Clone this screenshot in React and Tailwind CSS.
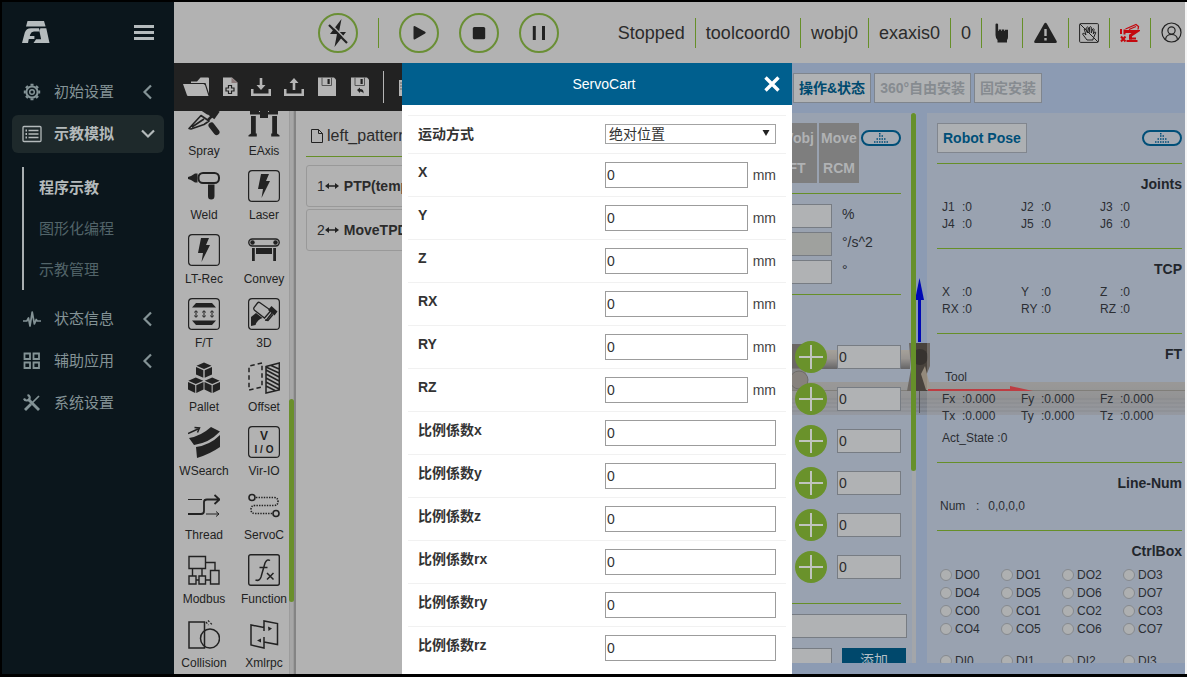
import React from "react";

const LINE = "border-[#668f28]";

function Logo() {
  return (
    <svg width="28" height="22" viewBox="0 0 28 22" fill="#b5bbbd">
      <path d="M5.5 0H22l1.600 5.600H4z" />
      <path d="M0 22 2.800 11.500Q4.200 7.200 9 7.200h8l1 3.400h-6q-2.800 0-3.800 2.800l-.4 1.600h4.600v3H6.800L6 22z" />
      <path d="M18.300 7.200h6L27.500 22H11.500l2.600-3.800h5L17.600 11z" />
    </svg>
  );
}

function Chevron({ down }) {
  return (
    <svg width="16" height="16" viewBox="0 0 16 16" fill="none" stroke="currentColor" strokeWidth="2.200">
      <path d={down ? "M2 4.500l6 6 6-6" : "M11 1.500 4.500 8l6.500 6.500"} />
    </svg>
  );
}

const sideIcons = {
  gear: (
    <svg width="20" height="20" viewBox="0 0 20 20" fill="none" stroke="currentColor">
      <circle cx="10" cy="10" r="5.600" strokeWidth="2" />
      <circle cx="10" cy="10" r="2.300" strokeWidth="1.500" />
      <path strokeWidth="3" d="M10 1.800v2M10 16.200v2M1.800 10h2M16.200 10h2M4.200 4.200l1.400 1.400M14.400 14.400l1.400 1.400M4.200 15.800l1.400-1.400M14.400 5.600l1.400-1.400" />
    </svg>
  ),
  list: (
    <svg width="20" height="20" viewBox="0 0 20 20" fill="none" stroke="currentColor" strokeWidth="1.300">
      <rect x="1" y="2.500" width="18" height="15" rx="1" />
      <path d="M3.500 6.500H5M3.500 10H5M3.500 13.500H5" strokeWidth="2" />
      <path d="M6.500 6.500h10M6.500 10h10M6.500 13.500h10" />
    </svg>
  ),
  pulse: (
    <svg width="20" height="20" viewBox="0 0 20 20" fill="none" stroke="currentColor" strokeWidth="1.700" strokeLinejoin="round">
      <path d="M1 12h3.800l1.700-3 1.500 8L10.200 3l2.200 12 1.800-4.500 1 1.500H19" />
    </svg>
  ),
  grid: (
    <svg width="20" height="20" viewBox="0 0 20 20" fill="none" stroke="currentColor" strokeWidth="1.800">
      <path d="M2.500 2.500h5.500v5.500H2.500zM11.500 2.500H17v5.500h-5.500zM2.500 11.500h5.500V17H2.500zM11.500 11.500H17V17h-5.500z" />
    </svg>
  ),
  tools: (
    <svg width="20" height="20" viewBox="0 0 20 20" fill="none" stroke="currentColor">
      <path strokeWidth="2.800" d="M6 6l11 11" />
      <path strokeWidth="1.700" d="M17 3 8.500 11.500" />
      <path strokeWidth="2.800" d="M8.800 11.200 3 17" />
      <path strokeWidth="2.200" d="M2 5.500c1 2.500 4 2.500 5.200.8S7.500 2.500 5.500 2" />
    </svg>
  ),
};

function SideItem({ icon, label, chevron, active }) {
  return (
    <button
      type="button"
      className={
        active
          ? "flex h-[38px] w-full items-center rounded-md bg-[#1e292b] pl-[10px] pr-2 text-[15px] font-bold text-[#b4babb]"
          : "flex h-[38px] w-full items-center rounded-md pl-[10px] pr-2 text-[15px] text-[#849396]"
      }
    >
      {sideIcons[icon]}
      <span className="ml-3 flex-1 text-left">{label}</span>
      {chevron && <Chevron down={active} />}
    </button>
  );
}

function Sidebar() {
  return (
    <nav className="flex w-[172px] flex-none flex-col bg-[#0b161c] px-[10px]">
      <div className="mb-[11px] flex h-[60px] items-center justify-between px-[10px]">
        <Logo />
        <button type="button" aria-label="菜单" className="flex flex-col gap-[3px]">
          <span className="block h-[3px] w-5 bg-[#b5bbbd]" />
          <span className="block h-[3px] w-5 bg-[#b5bbbd]" />
          <span className="block h-[3px] w-5 bg-[#b5bbbd]" />
        </button>
      </div>
      <div className="flex flex-col gap-1">
        <SideItem icon="gear" label="初始设置" chevron />
        <SideItem icon="list" label="示教模拟" chevron active />
      </div>
      <ul className="mb-[10px] ml-[10px] mt-[14px] border-l-2 border-[#a9afb1] pl-[15px] text-[15px] leading-[41px] text-[#526469]">
        <li><a href="#program" className="font-bold text-[#b4babb]">程序示教</a></li>
        <li><a href="#graph">图形化编程</a></li>
        <li><a href="#manage">示教管理</a></li>
      </ul>
      <div className="flex flex-col gap-1">
        <SideItem icon="pulse" label="状态信息" chevron />
        <SideItem icon="grid" label="辅助应用" chevron />
        <SideItem icon="tools" label="系统设置" />
      </div>
    </nav>
  );
}

function RoundButton({ label, children }) {
  return (
    <button type="button" aria-label={label} className="flex size-10 items-center justify-center rounded-full border-2 border-[#6a8f35]">
      <svg width="24" height="28" viewBox="0 -2 24 28" fill="#222">{children}</svg>
    </button>
  );
}

function Status({ children, last }) {
  return (
    <div className={last ? "flex h-[30px] items-center pl-[10px]" : "flex h-[30px] items-center border-r border-[#668f28] px-[10px]"}>
      {children}
    </div>
  );
}

function Header() {
  return (
    <header className="flex h-[61px] flex-none items-center justify-between bg-[#b2b2b2] pl-36 pr-[3px]">
      <div className="flex items-center gap-5">
        <RoundButton label="伺服">
          <path d="M15.500-2 4 13h7L8.500 26 20 11h-7z" />
          <path d="M4.500 2.500 22 20.500" stroke="#b2b2b2" strokeWidth="1.500" />
          <path d="M3 4 21 22" stroke="#222" strokeWidth="2.200" />
        </RoundButton>
        <span className="h-[30px] w-px bg-[#668f28]" />
        <RoundButton label="运行"><path d="M6.500 6.200q0-1.800 1.600-1l10 5.600q1.400.9 0 1.800l-10 5.600q-1.600.8-1.600-1z" /></RoundButton>
        <RoundButton label="停止"><rect x="5.800" y="6" width="12.400" height="12.200" rx="1.500" /></RoundButton>
        <RoundButton label="暂停"><path d="M5.800 5h3v14h-3zM15 5h3v14h-3z" /></RoundButton>
      </div>
      <div className="flex items-center text-lg text-[#2b2b2b]">
        <Status>Stopped</Status>
        <Status>toolcoord0</Status>
        <Status>wobj0</Status>
        <Status>exaxis0</Status>
        <Status>0</Status>
        <Status>
          <svg width="20" height="22" viewBox="0 0 20 22" fill="#222">
            <path d="M3.500 2.500q0-1 1.300-1t1.300 1V9h.6V7.500h2.400V9h.6V7.500h2.400V9h.6V7.800h3.300V15q0 2-1 3v2.500H5.500V18Q3.500 16 3.500 13z" />
          </svg>
        </Status>
        <Status>
          <svg width="25" height="22" viewBox="0 0 25 22">
            <path d="M11 2q1.500-2.400 3 0l9.600 17q.8 2-1.200 2H2.600q-2 0-1.200-2z" fill="#222" />
            <path d="M12.500 7v7M12.500 16v2.500" stroke="#b2b2b2" strokeWidth="2.400" />
          </svg>
        </Status>
        <Status>
          <svg width="20" height="20" viewBox="0 0 20 20" fill="none" stroke="#222" strokeWidth="1">
            <rect x=".6" y=".6" width="18.800" height="18.800" rx="1" />
            <path d="M8 17l-4.500-6q.3-1.300 1.800-.5L7 12 5.200 6q.6-1.300 1.500 0L8.500 10 7.700 4.500q.8-1.200 1.600 0L10.300 9.500 10.700 4q.9-1 1.600.2V10l1.400-4q1-.8 1.400.3L14.300 11l1.300-2q1.100-.4 1.100.8L14 16v1zM1 1l18 18" />
          </svg>
        </Status>
        <Status>
          <svg width="20" height="20" viewBox="0 0 20 20" fill="none" stroke="#c4090f">
            <path strokeWidth="3" d="M5 8.500h11.500l-6 4v4" />
            <path strokeWidth="1.300" d="M5.500 6 16 1.500l2.500 2-.5 3M9 6.500 16 3.500" />
            <path strokeWidth="2" d="M1 6v5M4.500 6.500v5M6.500 18h11M9 15.500h7" />
            <path strokeWidth="2" d="M1 13.500l4.500 5M5.500 13.500 1 18.500" />
          </svg>
        </Status>
        <Status last>
          <svg width="21" height="21" viewBox="0 0 21 21" fill="none" stroke="#222" strokeWidth="1.200">
            <circle cx="10.500" cy="10.500" r="9.500" />
            <circle cx="10.500" cy="8.500" r="3.600" />
            <path d="M4.500 17.500q.6-5 6-5t6 5" />
          </svg>
        </Status>
      </div>
    </header>
  );
}

function FileButton({ label, w, children }) {
  return (
    <button type="button" aria-label={label}>
      <svg width={w} height="20" viewBox={`0 0 ${w} 20`} fill="#b5b5b5">{children}</svg>
    </button>
  );
}

function FileBar() {
  return (
    <div className="flex h-12 flex-none items-center gap-[13px] overflow-hidden bg-[#222] pl-[9px]">
      <FileButton label="打开" w={26}>
        <path d="M8 4.500h6L17.500.5H25q1 0 1 1v15L22.500 6H8z" />
        <path d="M0 7h20.500l1.500 1 3.500 11H5q-.8 0-1-.8z" />
      </FileButton>
      <FileButton label="新建" w={16}>
        <path d="M1 .5h9l5.500 5V19H1z" />
        <path d="M9.500.5 15.500 6h-6z" fill="#8a7878" />
        <path d="M6.500 8.500h3v2.500H12v3H9.500v2.500h-3V14H4v-3h2.500z" fill="#b5b5b5" stroke="#222" strokeWidth="1.200" />
      </FileButton>
      <FileButton label="导入" w={20}>
        <path d="M0 12h2.500v4.500h15V12H20v7H0zM8.700 1h2.600v7h3.200L10 13 5.500 8h3.200z" />
      </FileButton>
      <FileButton label="导出" w={20}>
        <path d="M0 12h2.500v4.500h15V12H20v7H0zM8.700 13h2.600V6h3.200L10 1 5.500 6h3.200z" />
      </FileButton>
      <FileButton label="保存" w={20}>
        <path d="M1 .5h16l2 2V19H1z" />
        <path d="M5 .5v8h9.500v-8" fill="none" stroke="#555" />
        <path d="M10.500 2h2.200v5h-2.200z" fill="#222" />
      </FileButton>
      <FileButton label="另存为" w={20}>
        <path d="M1 .5h16l2 2V19H1z" />
        <path d="M5 .5v8h9.500v-8" fill="none" stroke="#555" />
        <path d="M10.500 2h2.200v5h-2.200zM7 13l3-2.500v1.600q4 0 3.500 4.400-.8-2-3.500-2v1.500z" fill="#222" />
      </FileButton>
      <span className="h-8 w-px flex-none bg-[#b5b5b5]" />
      <FileButton label="复制" w={20}>
        <path d="M2 3h15v16H2z" />
        <path d="M3 6h8M3 9h8M3 12h8" stroke="#666" />
      </FileButton>
    </div>
  );
}

const frame = <rect x=".6" y=".6" width="30.800" height="30.800" rx="3.500" fill="none" stroke="#222" strokeWidth="1.200" />;
const bolt = <path d="M13 4h8l-3 7h4L13.500 28l1.500-9h-5z" fill="#222" />;

const tools = [
  ["Spray", <g fill="none" stroke="#222"><path strokeWidth="1.600" strokeLinejoin="round" d="M1 22.500 13 9.500l8 5.500-5 3.500-13 4.500zM4 21l12-8" /><path strokeWidth="5.500" d="M15 2.500l6 4" /><path strokeWidth="9" d="M21.500 4l7.500 5.500" /><path strokeWidth="2.500" d="M20 14l4-4" /><path strokeWidth="6" strokeLinecap="round" d="M23.500 19.500l5 6.500" /></g>],
  ["EAxis", <g fill="#222"><path d="M2 4h9v2h10V4h9v4.500H2zM12 4h8v8h-8zM3 10h4.800v18H3zM24.200 10H29v18h-4.800z" /><path d="M.5 30.500v-1.200L3 27.500h5.800v3zM31.500 30.500v-1.200L29 27.500h-5.800v3z" /></g>],
  ["Weld", <g><rect x="10.500" y="3" width="20.500" height="10" rx="4.500" fill="none" stroke="#222" strokeWidth="2" /><path d="M0 7l3-1 4-2.500h2.500v9H7L3 10 0 9z" fill="#222" /><path d="M20 14.500h6.500V26q0 3.500-3.300 3.500T20 26z" fill="#222" /></g>],
  ["Laser", <g>{frame}{bolt}</g>],
  ["LT-Rec", <g>{frame}{bolt}</g>],
  ["Convey", <g><rect x=".8" y="5" width="30.400" height="7" rx="3.500" fill="none" stroke="#222" strokeWidth="1.400" /><circle cx="4.500" cy="8.500" r="2.200" fill="#222" /><circle cx="27.500" cy="8.500" r="2.200" fill="#222" /><path d="M8 14h16v6H8zM4 14h2.800v13H4zM25.200 14H28v13h-2.800z" fill="#222" /></g>],
  ["F/T", <g>{frame}<path d="M8 5h16l4 4.500H4zM4 22.500h24l-4 4.500H8z" fill="#222" /><path d="M6.500 14.500Q8 11 9.500 14.500M6.500 17.500Q8 21 9.500 17.500M8 13v6M14.500 14.500q1.500-3.500 3 0M14.500 17.500q1.500 3.500 3 0M16 13v6M22.500 14.500q1.500-3.500 3 0M22.500 17.500q1.500 3.500 3 0M24 13v6" fill="none" stroke="#222" strokeWidth="1" /></g>],
  ["3D", <g>{frame}<path d="M3 19l5-4 6.500 5q-5 1.500-7 7L3 28zM20 12l3.500-4 6 5.500-3 4z" fill="#222" /><path d="M9.500 5 6 9.500q-.8 1.500.5 2.700L16.500 20l6.500-7.500L12 4.700q-1.500-1-2.500.3zM18.500 22l5.500-7M17 22l3 .5 5-6" fill="none" stroke="#222" strokeWidth="1.300" /></g>],
  ["Pallet", <g fill="#222"><path d="M16 .5l7.500 3.300L16 7 8.500 3.800zM8 5l7.300 3.200v7.500L8 12.500zM24 5l-7.300 3.200v7.500l7.300-3.200zM7.800 15.500l7.500 3.300-7.500 3.300-7.500-3.300zM0 20l7.200 3.200V31L0 27.500zM15.500 20l-7.200 3.200V31l7.200-3.500zM24.200 15.500l7.500 3.300-7.500 3.300-7.500-3.300zM16.500 20l7.100 3.200V31l-7.100-3.500zM32 20l-7.300 3.200V31l7.300-3.500z" /></g>],
  ["Offset", <g fill="none" stroke="#222" strokeWidth="1.500"><path strokeDasharray="4.500 3" d="M14 1 1 4v24l13-3z" /><path d="M18 4.500 31.300 1v27L18 31zM18 8l13 7M18 12l13 7M18 16l13 7M18 20l13 7M18 24l10 5M18 5l13 6M23 3.500l8 3.500" /></g>],
  ["WSearch", <g fill="#222"><path d="M1 12q12-2 22-11l9 4.500Q21 17 6 19zM8 21q14-2 24-12v12Q22 28 9 32z" /><path d="M0 7.500 11 2.500M6.500 1.500 11.500 2 9.500 6.500" fill="none" stroke="#222" strokeWidth="1.500" /></g>],
  ["Vir-IO", <g>{frame}<text x="16" y="14" fontSize="12" fontWeight="bold" textAnchor="middle" fill="#222">V</text><text x="16" y="27" fontSize="10" fontWeight="bold" textAnchor="middle" fill="#222">I / O</text></g>],
  ["Thread", <g fill="none" stroke="#222"><path strokeWidth="1" d="M0 9.500h14M18 24h13M28 21.500l3 2.500-3 2.500" /><path strokeWidth="1.800" d="M0 24h13q3 0 3-3v-9q0-2.500 3-2.500h12M26.500 5l5 4.500-5 4.500" /></g>],
  ["ServoC", <g fill="none" stroke="#222" strokeWidth="1.600"><circle cx="4" cy="7.500" r="3" /><circle cx="28" cy="23.500" r="3" /><path strokeDasharray="1.400 1.200" d="M8 7.500h18q4 0 4 4t-4 4H7q-4 0-4 4t4 4h17" /></g>],
  ["Modbus", <g fill="none" stroke="#222" strokeWidth="1.400"><path d="M1 2.500h16.500v12H1zM17.500 8.500h9.500v8M22.500 16.500H31V30h-8.500zM1 22h7v8H1zM11 22h6.500v8H11zM4.500 14.500V22M14 14.500V22M8 26h3M17.500 26h5" /></g>],
  ["Function", <g><rect x=".7" y=".7" width="30.600" height="30.600" rx="2" fill="none" stroke="#222" strokeWidth="1.400" /><path d="M22 6.500Q19 4.500 17 9l-4 14q-1.500 4.500-5.500 3M11.500 13.500h8M19 19l6.500 6.500M25.500 19 19 25.500" fill="none" stroke="#222" strokeWidth="1.500" /></g>],
  ["Collision", <g fill="none" stroke="#222" strokeWidth="1.500"><path d="M1 4h15.500v26H1z" /><circle cx="22" cy="20.500" r="9.500" /><path strokeDasharray="2 1.500" d="M18 4l2.500 3M20 2.500l4.500 4.500" strokeWidth="1.200" /></g>],
  ["Xmlrpc", <g fill="none" stroke="#222" strokeWidth="1.500"><path d="M16 13V3l13.500 2.500v21L16 24M16 9.500 3 7v20l13 3V19" /><path d="M20 8.500l4 2-3.500 2.500zM13 20.500l-4 2 4 2z" fill="#222" stroke="none" /></g>],
];

function ToolBox() {
  return (
    <div className="relative w-[122px] flex-none overflow-hidden border-r-2 border-[#848484]">
      <div className="-mt-[5px] grid grid-cols-2 gap-y-2">
        {tools.map(([name, art]) => (
          <button type="button" key={name} className="flex h-14 flex-col items-center text-xs leading-[26px] text-[#222]">
            <svg width="32" height="32" viewBox="0 0 32 32" className="flex-none">{art}</svg>
            {name}
          </button>
        ))}
      </div>
      <div className="absolute inset-y-0 right-0 w-[5px] border-x border-[#9c9c9c] bg-[#a6a6a6]" />
      <div className="absolute right-0 top-[288px] h-[203px] w-[5px] rounded bg-[#6a8f2b]" />
    </div>
  );
}

function ProgramRow({ n, text }) {
  return (
    <li className="flex h-[42px] items-center rounded-[3px] border border-[#999] pl-[10px] text-sm">
      {n}
      <svg width="14" height="10" viewBox="0 0 14 10" fill="#222"><path d="M0 5l4-3v2.200h6V2L14 5l-4 3V5.800H4V8z" /></svg>
      <b className="ml-[5px] whitespace-nowrap">{text}</b>
    </li>
  );
}

function Program() {
  return (
    <div className="min-w-0 flex-1 overflow-hidden pl-[10px] text-[#2b2b2b]">
      <div className={`mb-2 flex h-[46px] items-center border-b ${LINE} pl-[5px] pt-[5px] text-base`}>
        <svg width="12" height="14" viewBox="0 0 12 14" fill="none" stroke="#222" className="mr-1"><path d="M.5.500h7L11.500 4.500v9H.5zM7.500.5v4h4" /></svg>
        left_pattern
      </div>
      <ul className="flex flex-col gap-0.5">
        <ProgramRow n="1" text="PTP(temp" />
        <ProgramRow n="2" text="MoveTPD" />
      </ul>
    </div>
  );
}

function Scene() {
  return (
    <svg width="440" height="611" viewBox="745 63 440 611" className="absolute inset-y-0 right-0">
      <defs>
        <linearGradient id="ground" x1="0" y1="0" x2="0" y2="1">
          <stop offset="0" stopColor="#8d8d8d" />
          <stop offset=".5" stopColor="#828488" />
          <stop offset="1" stopColor="#868e9c" />
        </linearGradient>
        <linearGradient id="arm" x1="0" y1="0" x2="0" y2="1">
          <stop offset="0" stopColor="#a09a90" />
          <stop offset=".45" stopColor="#8a8682" />
          <stop offset="1" stopColor="#3c3d41" />
        </linearGradient>
      </defs>
      <rect x="745" y="382" width="440" height="33" fill="url(#ground)" />
      <path d="M745 390.500h440" stroke="#66645f" />
      <path d="M745 399h440M745 403h440M745 407h440M745 411h440" stroke="#70747c" strokeWidth=".7" />
      <path d="M919.500 391v22" stroke="#555" />
      <rect x="780" y="344" width="30" height="25" fill="#45413e" />
      <rect x="815" y="350" width="95" height="19" fill="url(#arm)" />
      <path d="M780 368h25l4 22h-29z" fill="#65615b" opacity=".7" />
      <circle cx="799" cy="380" r="9" fill="#706b64" stroke="#4c4945" />
      <path d="M909 343h21v23l-4 10 4 15h-23l4-22z" fill="#49433c" />
      <circle cx="920" cy="357" r="8" fill="#37332f" />
      <path d="M925 366l6 24h-5l-5-16z" fill="#948a7b" />
      <path d="M919.500 300v42" stroke="#0008b4" strokeWidth="3" />
      <path d="M919.500 278l4.500 22h-9z" fill="#0008b4" />
      <path d="M928 390h90" stroke="#c4000a" strokeWidth="2" />
      <path d="M1010 386l23 5h-23z" fill="#c4000a" />
    </svg>
  );
}

function Pill() {
  return (
    <button type="button" aria-label="展开" className="flex h-4 w-10 items-center justify-center rounded-full border-2 border-[#004f78] bg-[#a4abb4]">
      <svg width="15" height="10" viewBox="0 0 15 10" stroke="#004f78" strokeWidth="1.500" strokeDasharray="1.500 1">
        <path d="M0 9h15M2.500 6h10M5 3h5M5 .8h1.500" />
      </svg>
    </button>
  );
}

function Box({ label, className = "", muted, ...rest }) {
  return (
    <input
      aria-label={label}
      className={`block h-6 border border-[#777c83] pl-px text-sm text-[#2b2b2b] ${muted ? "bg-[#9fa19e]" : "bg-[#b0b2b4]"} ${className}`}
      {...rest}
    />
  );
}

function Operations() {
  return (
    <section className="relative w-[171px] flex-none overflow-hidden bg-[#b1afad]/35 pl-5 pr-[15px] pt-[10px] text-[#2b2e33]">
      <div className="flex items-start">
        <div className="ml-[12px] grid flex-none grid-cols-2 gap-x-0.5 text-sm font-bold text-[#b0b2b4]">
          <button type="button" className="h-[30px] w-10 bg-[#7e7e7e]">Wobj</button>
          <button type="button" className="h-[30px] w-10 bg-[#7e7e7e]">Move</button>
          <button type="button" className="h-[30px] w-10 bg-[#7e7e7e]">FT</button>
          <button type="button" className="h-[30px] w-10 bg-[#7e7e7e]">RCM</button>
        </div>
        <div className="ml-0.5 mt-[7px]"><Pill /></div>
      </div>
      <div className={`mt-[10px] flex flex-col gap-1 border-y ${LINE} py-[10px] text-sm leading-5`}>
        {["%", "°/s^2", "°"].map((unit) => (
          <label key={unit} className="flex h-6 items-start gap-[10px]">
            <Box label={unit} className="w-[67px] flex-none" muted={unit === "°/s^2"} />
            {unit}
          </label>
        ))}
      </div>
      <div className={`flex flex-col gap-[10px] border-b ${LINE} pb-5 pt-[46px]`}>
        {[1, 2, 3, 4, 5, 6].map((j) => (
          <div key={j} className="flex items-center justify-end gap-[10px]">
            <button type="button" aria-label={`J${j}+`} className="flex size-8 items-center justify-center rounded-full bg-[#6a922b]">
              <svg width="24" height="24" viewBox="0 0 24 24" stroke="#c0c4bd" strokeWidth="2"><path d="M12 0v24M0 12h24" /></svg>
            </button>
            <Box label={`J${j}`} className="w-16" defaultValue="0" />
          </div>
        ))}
      </div>
      <div className="-mr-1.5 mt-[10px]">
        <Box label="名称" className="w-full" />
        <div className="mt-[10px] flex gap-[10px] pr-px">
          <Box label="点名" className="min-w-0 flex-1" />
          <button type="button" className="h-6 w-16 bg-[#00486c] text-sm text-[#b4bfc6]">添加</button>
        </div>
      </div>
      <div className="absolute inset-y-0 right-0 w-1 bg-[#a3a6aa]" />
      <div className="absolute right-0 top-0 h-[358px] w-[5px] rounded bg-[#66902a]" />
    </section>
  );
}

function Heading({ children }) {
  return <h2 className={`border-t ${LINE} pt-[10px] text-right text-sm font-bold leading-5 text-[#22262c]`}>{children}</h2>;
}

function Values({ items }) {
  return (
    <dl className="grid grid-cols-[79px_79px_79px] pl-[5px]">
      {items.map(([k, v]) => (
        <div key={k} className="flex">
          <dt className="w-5">{k}</dt>
          <dd>:{v}</dd>
        </div>
      ))}
    </dl>
  );
}

const outputs = ["DO0", "DO1", "DO2", "DO3", "DO4", "DO5", "DO6", "DO7", "CO0", "CO1", "CO2", "CO3", "CO4", "CO5", "CO6", "CO7"];
const inputs = ["DI0", "DI1", "DI2", "DI3"];

function Signals({ names }) {
  return (
    <div className="grid grid-cols-[61px_61px_61px_61px] pl-[3px] leading-[18px]">
      {names.map((n) => (
        <label key={n} className="flex items-center gap-[3px]">
          <input type="radio" name={n} className="size-3 appearance-none rounded-full border border-[#868a8f] bg-[#aeb0b1]" />
          {n}
        </label>
      ))}
    </div>
  );
}

function RobotState() {
  return (
    <section className="min-w-0 flex-1 overflow-hidden bg-[#b1afad]/35 pl-[10px] pr-[3px] pt-[10px] text-xs leading-[17px] text-[#2b2e33]">
      <div className="mb-[10px] flex items-center justify-between">
        <button type="button" className="h-[30px] border border-[#81868e] bg-[#adb0b3] px-[5px] text-sm font-bold text-[#004f78]">Robot Pose</button>
        <Pill />
      </div>
      <Heading>Joints</Heading>
      <div className="mb-[15px] mt-[5px]">
        <Values items={[["J1", 0], ["J2", 0], ["J3", 0], ["J4", 0], ["J5", 0], ["J6", 0]]} />
      </div>
      <Heading>TCP</Heading>
      <div className="mb-[15px] mt-[5px]">
        <Values items={[["X", 0], ["Y", 0], ["Z", 0], ["RX", 0], ["RY", 0], ["RZ", 0]]} />
      </div>
      <Heading>FT</Heading>
      <div className="mb-[15px] mt-[5px]">
        <p className="mb-[5px] pl-2">Tool</p>
        <Values items={[["Fx", "0.000"], ["Fy", "0.000"], ["Fz", "0.000"], ["Tx", "0.000"], ["Ty", "0.000"], ["Tz", "0.000"]]} />
        <p className="mt-[5px] pl-[5px]">Act_State :0</p>
      </div>
      <Heading>Line-Num</Heading>
      <dl className="mb-[15px] mt-[5px] flex pl-[3px]">
        <dt className="w-9">Num</dt>
        <dd className="flex gap-[9px]"><span>:</span><span>0,0,0,0</span></dd>
      </dl>
      <Heading>CtrlBox</Heading>
      <div className="mt-[5px] flex flex-col gap-[14px]">
        <Signals names={outputs} />
        <Signals names={inputs} />
      </div>
    </section>
  );
}

function RightSide() {
  return (
    <div className="relative flex w-[440px] flex-none flex-col bg-[#8c9bb3]">
      <Scene />
      <div className="relative flex min-h-0 flex-1 flex-col pb-[11px]">
        <div className="flex h-[50px] flex-none items-center gap-[3px] pl-12 text-sm font-bold text-[#868b90]">
          <button type="button" className="h-[30px] border border-[#7f858d] bg-[#b0b2b4] px-[5px] text-[#004a6f]">操作&amp;状态</button>
          <button type="button" className="h-[30px] border border-[#7f858d] bg-[#b0b2b4] px-[5px]">360°自由安装</button>
          <button type="button" className="h-[30px] border border-[#7f858d] bg-[#b0b2b4] px-[5px]">固定安装</button>
        </div>
        <div className="flex min-h-0 flex-1 gap-[11px]">
          <Operations />
          <RobotState />
        </div>
      </div>
    </div>
  );
}

const fields = [
  ["X", "mm"], ["Y", "mm"], ["Z", "mm"], ["RX", "mm"], ["RY", "mm"], ["RZ", "mm"],
  ["比例係数x"], ["比例係数y"], ["比例係数z"], ["比例係数rx"], ["比例係数ry"], ["比例係数rz"],
];

function Dialog() {
  return (
    <div role="dialog" aria-label="ServoCart" className="absolute bottom-0 left-[400px] top-[61px] flex w-[390px] flex-col bg-white text-sm text-[#333]">
      <div className="flex h-[42px] flex-none items-center bg-[#005f8e] pl-[42px] pr-3 text-white">
        <h1 className="flex-1 text-center font-medium">ServoCart</h1>
        <button type="button" aria-label="关闭">
          <svg width="16" height="16" viewBox="0 0 16 16" stroke="#fff" strokeWidth="3.400"><path d="M1.500 1.500l13 13M14.500 1.500l-13 13" /></svg>
        </button>
      </div>
      <form className="min-h-0 flex-1 overflow-hidden px-1.5 pt-[10px]">
        <div className="flex h-[38px] items-start border-t border-[#f1f1f1] pl-[10px] pt-2">
          <label htmlFor="mode" className="w-[187px] font-bold leading-5">运动方式</label>
          <div className="relative w-[171px]">
            <select id="mode" className="block h-5 w-full appearance-none border border-[#a3a3a3] bg-white pl-[3px] text-sm leading-4">
              <option>绝对位置</option>
              <option>相对位置</option>
            </select>
            <svg width="8" height="6" viewBox="0 0 8 6" className="pointer-events-none absolute right-[6px] top-[6px]"><path d="M.500 0h7L4 6z" fill="#222" /></svg>
          </div>
        </div>
        {fields.map(([name, unit]) => (
          <div key={name} className="flex h-[43px] items-start border-t border-[#f1f1f1] pl-[10px] pt-2">
            <label htmlFor={name} className="w-[187px] font-bold leading-5">{name}</label>
            <div className="flex w-[171px] items-center justify-between">
              <input id={name} defaultValue="0" className={unit ? "h-[26px] w-[143px] border border-[#9c9c9c] pl-px" : "h-[26px] w-full border border-[#9c9c9c] pl-px"} />
              {unit && <span className="text-[#444]">{unit}</span>}
            </div>
          </div>
        ))}
      </form>
    </div>
  );
}

export default function App() {
  return (
    <div className="h-screen bg-[#f4f4f4] font-['Liberation_Sans','Noto_Sans_CJK_SC',sans-serif]">
      <div className="h-full border-b-[3px] border-t-2 border-black pr-0.5">
        <div className="relative flex h-full overflow-hidden border-l-2 border-black">
          <Sidebar />
          <div className="flex min-w-0 flex-1 flex-col bg-[#b2b2b2]">
            <Header />
            <div className="flex min-h-0 flex-1">
              <div className="flex min-w-0 flex-1 flex-col">
                <FileBar />
                <div className="flex min-h-0 flex-1">
                  <ToolBox />
                  <Program />
                </div>
              </div>
              <RightSide />
            </div>
          </div>
          <Dialog />
        </div>
      </div>
    </div>
  );
}
